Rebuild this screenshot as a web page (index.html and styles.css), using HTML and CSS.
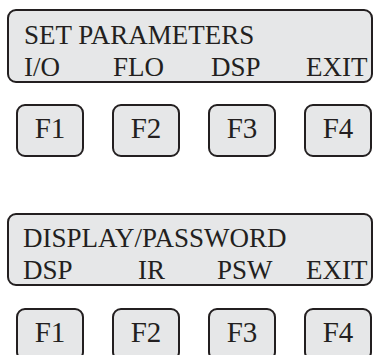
FILE: index.html
```html
<!DOCTYPE html>
<html>
<head>
<meta charset="utf-8">
<link rel="stylesheet" href="styles.css">
</head>
<body>
<div class="page">
  <section class="unit unit-first">
    <div class="screen screen-a">
      <div class="title">SET PARAMETERS</div>
      <div class="labels labels-a">
        <span>I/O</span><span>FLO</span><span>DSP</span><span>EXIT</span>
      </div>
    </div>
    <div class="keys">
      <div class="key">F1</div>
      <div class="key">F2</div>
      <div class="key">F3</div>
      <div class="key">F4</div>
    </div>
  </section>
  <section class="unit unit-second">
    <div class="screen screen-b">
      <div class="title">DISPLAY/PASSWORD</div>
      <div class="labels labels-b">
        <span>DSP</span><span>IR</span><span>PSW</span><span>EXIT</span>
      </div>
    </div>
    <div class="keys keys-b">
      <div class="key">F1</div>
      <div class="key">F2</div>
      <div class="key">F3</div>
      <div class="key">F4</div>
    </div>
  </section>
</div>
</body>
</html>
```
FILE: styles.css
```css
html, body {
  margin: 0;
  padding: 0;
  background: #ffffff;
}
body {
  width: 373px;
  height: 355px;
  overflow: hidden;
  font-family: "Liberation Serif", "Times New Roman", serif;
  color: #231f20;
}
.page {
  display: flex;
  flex-direction: column;
}
.unit-first {
  padding-top: 9px;
}
.unit-second {
  padding-top: 56px;
}
.screen {
  margin-left: 7px;
  width: 366px;
  height: 74px;
  box-sizing: border-box;
  border: 2px solid #231f20;
  border-radius: 9px;
  background: #e6e7e8;
  padding-top: 8px;
  font-size: 27px;
  line-height: 32px;
  white-space: nowrap;
}
.screen-a {
  padding-left: 15px;
}
.screen-b {
  padding-left: 14px;
  height: 73px;
  padding-top: 7px;
}
.labels {
  display: grid;
}
.labels-a {
  grid-template-columns: 89px 98px 95px auto;
}
.labels-b {
  grid-template-columns: 115px 79px 89px auto;
}
.keys {
  display: flex;
  gap: 28px;
  padding-left: 16px;
  margin-top: 21px;
}
.keys-b {
  margin-top: 22px;
}
.key {
  width: 68px;
  height: 53px;
  box-sizing: border-box;
  border: 2px solid #231f20;
  border-radius: 9px;
  background: #e6e7e8;
  text-align: center;
  font-size: 29px;
  line-height: 44px;
  padding-bottom: 5px;
}
```
